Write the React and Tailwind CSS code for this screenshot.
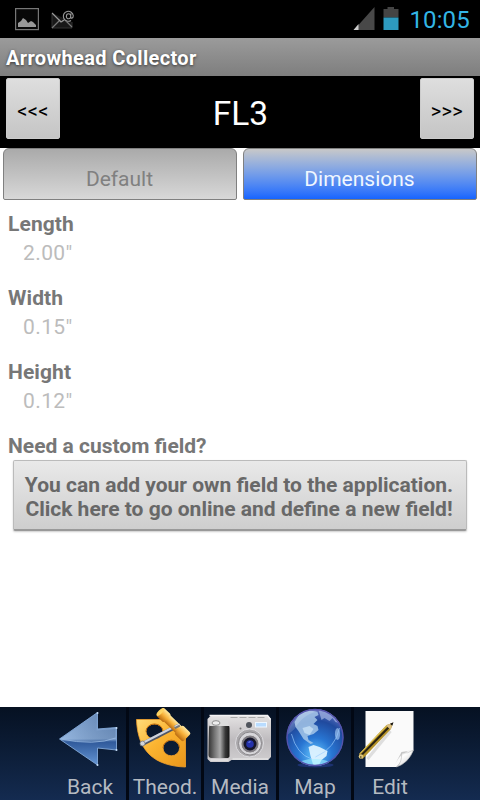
import React from "react";

function StatusBar() {
  return (
    <div className="flex h-[38px] items-start bg-black">
      <svg className="h-[38px] w-[90px] shrink-0" viewBox="0 0 90 38">
        <rect x="15.6" y="8.6" width="22.8" height="21" fill="#080808" stroke="#777" strokeWidth="1.2" />
        <path d="M18 27v-4l3-2 2-3 3 2 2 3 3-2 2 1 3 3v2z" fill="#999" />
        <path d="M52 14v14h20v-6M52 13l10 9 4-3" fill="#181818" stroke="#333" strokeWidth="1" />
        <path d="M52 28l8-8M72 27l-7-7" stroke="#777" strokeWidth="1.2" />
        <path d="M52 13l9 9 3-2" fill="none" stroke="#999" strokeWidth="1.2" />
        <circle cx="68.500" cy="16" r="5.800" fill="#050505" />
        <path d="M71 20.500a5 5 0 1 1 2.300-4.700c0 3-2.900 3-2.700.7l.4-2.800M70.700 16a2.200 2.200 0 1 1-4.300.2c0-3.200 4.300-3.400 4.300-.2" fill="none" stroke="#999" strokeWidth="1.100" />
      </svg>
      <div className="grow" />
      <svg className="h-[38px] w-[56px] shrink-0" viewBox="350 0 56 38">
        <path d="M354 30L374.500 7V30z" fill="#484848" />
        <path d="M353.500 30l5-6v6z" fill="#ccc" />
        <path d="M383.500 9h4V7h6.500v2h4.500v8.500h-15z" fill="#444" />
        <path d="M383.500 17.500h15V30h-15z" fill="#2d9abf" />
      </svg>
      <div className="w-[74px] pl-[3.500px] pt-[6px] text-[24px] leading-[28px] tracking-[0.1px] text-[#33b5e5]">10:05</div>
    </div>
  );
}

function StepButton({ children }) {
  return (
    <button className="h-[61px] w-[54px] rounded-[2px] border border-[#ccc] bg-linear-to-b from-[#dedede] to-[#c5c5c5] pt-[4px] text-[20px] leading-[20px] tracking-[0.3px] text-black">
      {children}
    </button>
  );
}

function Field({ label, value }) {
  return (
    <div className="h-[74px] pl-2">
      <div className="h-[29px] text-[21px] font-bold leading-[25px] tracking-[0.1px] text-[#777]">{label}</div>
      <div className="pl-[15px] text-[21px] leading-[25px] tracking-[0.4px] text-[#bcbcbc]">{value}</div>
    </div>
  );
}

function BackIcon() {
  return (
    <svg className="h-[66px] w-[75px] max-w-none shrink-0" viewBox="53.5 707 75 66">
      <defs>
        <linearGradient id="back" x1="0" y1="0" x2="0" y2="1">
          <stop offset="0" stopColor="#6d90c0" />
          <stop offset=".5" stopColor="#86a7d2" />
          <stop offset=".56" stopColor="#305a9b" />
          <stop offset="1" stopColor="#6596d5" />
        </linearGradient>
        <linearGradient id="backGloss">
          <stop offset="0" stopColor="#a9caf0" stopOpacity=".5" />
          <stop offset="1" stopColor="#43648f" stopOpacity=".35" />
        </linearGradient>
      </defs>
      <path d="M60 739L98 712.500V729L117 727.500V750L98 748V765z" fill="url(#back)" stroke="#83a9d9" strokeWidth=".9" />
      <path d="M61 739L97 714.500V730.500L116 729v9q-12 4-27 4-12-1-28-3z" fill="url(#backGloss)" />
      <path d="M61 739q34 7 55-1" fill="none" stroke="#9bbbe2" strokeWidth=".8" />
      <g fill="#c8e0fa"><circle cx="98" cy="713" r="1" /><circle cx="117" cy="728" r="1" /><circle cx="117" cy="750" r="1" /><circle cx="98" cy="765" r="1" /></g>
    </svg>
  );
}

function TheodIcon() {
  return (
    <svg className="h-[66px] w-[75px] max-w-none shrink-0" viewBox="128.5 707 75 66">
      <defs>
        <linearGradient id="gold" x1="0" y1="0" x2="1" y2="1">
          <stop offset="0" stopColor="#ffdc7b" /><stop offset=".45" stopColor="#fbb431" /><stop offset="1" stopColor="#e8951a" />
        </linearGradient>
        <linearGradient id="tube" x1="0" y1="0" x2="0" y2="1">
          <stop offset="0" stopColor="#ffe9a0" /><stop offset=".5" stopColor="#f9b23a" /><stop offset="1" stopColor="#b96b10" />
        </linearGradient>
      </defs>
      <path fillRule="evenodd" d="M137 719.500H167L186 734V767C156 766 138 752 137 719.500zM146.500 731.500a8.500 7.500 0 1 0 17 0a8.500 7.500 0 1 0-17 0M163.500 748a8.300 7.800 0 1 0 16.600 0a8.300 7.800 0 1 0-16.600 0" fill="url(#gold)" stroke="#f4a12a" strokeWidth=".8" />
      <path d="M146.500 731.500a8.500 7.500 0 0 1 17 0M163.500 748a8.300 7.800 0 0 1 16.600 0" fill="none" stroke="#bc6e12" strokeWidth="1" />
      <path d="M143 744L176 727" stroke="#515766" strokeWidth="3.800" />
      <path d="M143 743L176 726" stroke="#ced3dd" strokeWidth="2.200" />
      <g transform="translate(163 714) rotate(44)">
        <rect x="0" y="-4.500" width="31" height="9" rx="1.500" fill="url(#tube)" />
        <rect x="-4" y="-5.500" width="11" height="11" rx="2" fill="url(#tube)" />
        <rect x="22" y="-6" width="12" height="12" rx="2" fill="url(#tube)" />
        <ellipse cx="-3" cy="0" rx="2" ry="5" fill="#ffd462" />
      </g>
      <path d="M175 727.500l5-2.500" stroke="#777" strokeWidth="3.500" />
      <path d="M175 726.500l5-2.500" stroke="#ddd" strokeWidth="1.300" />
      <circle cx="143" cy="743.500" r="2.500" fill="#d0d4dc" stroke="#777" strokeWidth=".8" />
    </svg>
  );
}

function MediaIcon() {
  return (
    <svg className="h-[66px] w-[75px] max-w-none shrink-0" viewBox="203.5 707 75 66">
      <defs>
        <linearGradient id="body" x1="0" y1="0" x2="0" y2="1">
          <stop offset="0" stopColor="#e5e3e4" /><stop offset=".55" stopColor="#bdbabd" /><stop offset="1" stopColor="#d0ced0" />
        </linearGradient>
        <linearGradient id="grip">
          <stop offset="0" stopColor="#333" /><stop offset=".3" stopColor="#777" /><stop offset=".55" stopColor="#aaa" /><stop offset=".8" stopColor="#383838" /><stop offset="1" stopColor="#161616" />
        </linearGradient>
      </defs>
      <path d="M212 715H268l3.500 4v38l-3 3H232l-3 2H211l-3-3V719z" fill="url(#body)" />
      <path d="M210 715.500H268l3 4" fill="none" stroke="#f4f3f4" strokeWidth="1.500" />
      <path d="M231 717.500h35" stroke="#aaa" strokeWidth="1" strokeDasharray="7 2" />
      <path d="M209.500 728q0-4 4-4H226q4 0 4 4V756q0 2-3 2H212q-3 0-3-3z" fill="url(#grip)" />
      <path d="M212 719h15l3 7h-20z" fill="#dcdcdc" />
      <ellipse cx="216.500" cy="723" rx="4" ry="2.300" fill="#eee" stroke="#777" strokeWidth=".8" />
      <rect x="256" y="722.500" width="11" height="4.500" fill="#b9dcff" stroke="#eef7ff" />
      <circle cx="249.500" cy="725" r="3" fill="#50545c" />
      <circle cx="241" cy="728.500" r="1" fill="#777" />
      <circle cx="250" cy="743" r="14" fill="#a9a7aa" stroke="#dddce0" strokeWidth="1" />
      <circle cx="250.500" cy="743.500" r="11.500" fill="#d7d6da" stroke="#8a888c" />
      <circle cx="250.500" cy="744" r="9" fill="#807d83" stroke="#e0dfe2" strokeWidth=".8" />
      <circle cx="250.500" cy="744" r="6.500" fill="#15162b" />
      <circle cx="250.500" cy="744" r="3.800" fill="#2431aa" />
      <path d="M249 742.500l2-1" stroke="#738af0" strokeWidth="1.200" />
      <path d="M211 760h18M233 759h36" stroke="#eee" strokeWidth="1" />
    </svg>
  );
}

function MapIcon() {
  return (
    <svg className="h-[66px] w-[75px] max-w-none shrink-0" viewBox="278.5 707 75 66">
      <defs>
        <radialGradient id="sea" cx=".5" cy=".8" r=".85">
          <stop offset="0" stopColor="#65c7ff" /><stop offset=".35" stopColor="#2875d2" /><stop offset=".7" stopColor="#204a9e" /><stop offset="1" stopColor="#777fcc" />
        </radialGradient>
        <clipPath id="globe"><circle cx="315.500" cy="737.500" r="28.500" /></clipPath>
      </defs>
      <ellipse cx="316" cy="765" rx="18" ry="2.500" fill="#1c3270" />
      <circle cx="315.500" cy="737.500" r="28.500" fill="url(#sea)" />
      <g clipPath="url(#globe)">
        <path d="M295 722l5-8 9-4 9 2 1 3-4 2 3 3-4 4 4 2 1 4-5 4-6 2 1 4 5 3-3 1-7-5-5-8-3-4z" fill="#a9cbea" opacity=".82" />
        <path d="M303 728l7-2 4 3-4 6-5-2z" fill="#d8eefc" opacity=".6" />
        <path d="M319 710l6-1 10 6 5 8-4-1-3-4-3 3-5-3-3 2z" fill="#9dafe0" opacity=".75" />
        <path d="M309 747l5-2 6 2 8 4-1 5-5 4-3 6h-5l-3-10z" fill="#e2f4ff" opacity=".92" />
        <ellipse cx="338" cy="734" rx="2.600" ry="6" fill="#a5caf5" opacity=".65" />
        <path d="M292 734q5 20 20 25M340 728q-4 20-24 29" fill="none" stroke="#9dceff" strokeWidth="1" opacity=".65" />
        <path d="M288 735q1-23 24-25l10 1q-17 1-27 18z" fill="#fff" opacity=".16" />
        <ellipse cx="315" cy="764" rx="16" ry="5" fill="#a1f0ff" opacity=".6" />
      </g>
      <circle cx="315.500" cy="737.500" r="28" fill="none" stroke="#5553ac" strokeWidth="1.300" />
    </svg>
  );
}

function EditIcon() {
  return (
    <svg className="h-[66px] w-[75px] max-w-none shrink-0" viewBox="353.5 707 75 66">
      <defs>
        <linearGradient id="curl" x1="0" y1="0" x2=".8" y2="1"><stop offset="0" stopColor="#999" /><stop offset=".4" stopColor="#fff" /><stop offset="1" stopColor="#ccc" /></linearGradient>
      </defs>
      <path d="M366 711H414V750L397 767H366z" fill="#fafafa" />
      <path d="M414 750Q402 750 394 767L402 752z" fill="#ccc" />
      <path d="M414 750Q408 754 402 753Q403 762 397 767Q409 763 414 750z" fill="url(#curl)" stroke="#bbb" strokeWidth=".6" />
      <path d="M368 759L391 731" stroke="#ccc" strokeWidth="3" opacity=".6" />
      <path d="M359.500 754L387 725l6.500-2-2 6L363 759z" fill="#b6942b" />
      <path d="M361.500 755.500L389 727.500" stroke="#282313" strokeWidth="2" />
      <path d="M360.500 753.500L387 726" stroke="#e2c95a" strokeWidth="1" />
      <path d="M386.500 725.500l7-3-2.500 7z" fill="#d9be83" />
      <path d="M390.500 723.700l3.500-1.500-1.300 3.500z" fill="#111" />
      <circle cx="361.500" cy="756.500" r="2.300" fill="#dec67c" />
      <circle cx="361.300" cy="757" r=".8" fill="#342c13" />
    </svg>
  );
}

function NavItem({ icon, label, last }) {
  return (
    <button className={"flex h-full w-[75px] shrink-0 flex-col items-center border-r-[3px] " + (last ? "border-transparent" : "border-[#020814]")}>
      <span className="flex h-[66px] w-[75px] shrink-0">{icon}</span>
      <span className="block pt-px text-center text-[21px] leading-[27px] text-[#b5bac1]">{label}</span>
    </button>
  );
}

export default function App() {
  return (
    <div className="flex h-[800px] w-[480px] flex-col overflow-hidden bg-white font-['Roboto',sans-serif]">
      <StatusBar />
      <div className="h-[38px] bg-linear-to-b from-[#9b9b9b] to-[#7e7e7e] pl-[6px] pt-[8px] text-[20px] font-bold leading-[25px] tracking-[0.35px] text-white [text-shadow:0_1px_3px_#333]">
        Arrowhead Collector
      </div>
      <div className="flex h-[72px] items-start justify-between bg-black px-[6px] pt-[2px]">
        <StepButton>&lt;&lt;&lt;</StepButton>
        <div className="pl-px pt-[16px] text-[33.500px] leading-[40px] text-white">FL3</div>
        <StepButton>&gt;&gt;&gt;</StepButton>
      </div>
      <div className="flex h-[52px] gap-[6px] px-[3px]">
        <button className="h-[52px] w-[234px] rounded-t-[6px] rounded-b-[2px] border border-[#808080] bg-linear-to-b from-[#aaa] to-[#d8d8d8] pr-px pt-[11px] text-[21px] leading-[25px] text-[#808080]">Default</button>
        <button className="h-[52px] w-[234px] rounded-t-[6px] rounded-b-[2px] border border-[#808080] bg-linear-to-b from-[#c8c8c8] to-[#1564ff] pr-px pt-[11px] text-[21px] leading-[25px] text-[#f0f7ff]">Dimensions</button>
      </div>
      <div className="grow pt-[12px]">
        <Field label="Length" value={'2.00"'} />
        <Field label="Width" value={'0.15"'} />
        <Field label="Height" value={'0.12"'} />
        <div className="h-[26px] pl-2 text-[21px] font-bold leading-[25px] text-[#777]">Need a custom field?</div>
        <button className="mx-[13px] block h-[71px] w-[454px] whitespace-nowrap rounded-[2px] border border-b-2 border-[#bbb] border-b-[#999] bg-linear-to-b from-[#e9e9e9] to-[#cecece] pr-[2px] pt-[4px] text-center text-[21px] font-bold leading-[24px] text-[#686868] shadow-[0_1px_2px_#ccc]">
          You can add your own field to the application.<br />Click here to go online and define a new field!
        </button>
      </div>
      <div className="flex h-[93px] bg-linear-to-b from-[#061122] to-[#142b50] pl-[54px]">
        <NavItem icon={<BackIcon />} label="Back" />
        <NavItem icon={<TheodIcon />} label="Theod." />
        <NavItem icon={<MediaIcon />} label="Media" />
        <NavItem icon={<MapIcon />} label="Map" />
        <NavItem icon={<EditIcon />} label="Edit" last />
      </div>
    </div>
  );
}
